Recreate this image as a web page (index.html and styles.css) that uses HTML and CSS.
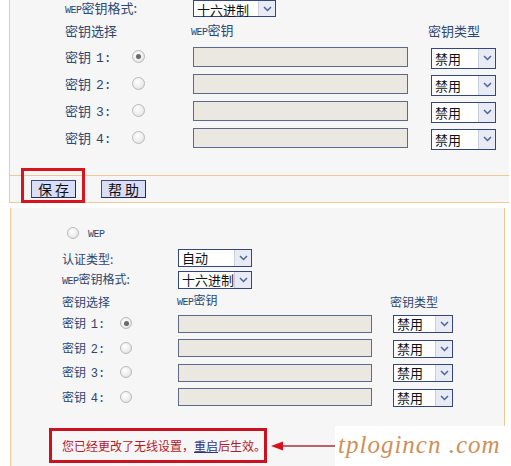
FILE: index.html
```html
<!DOCTYPE html>
<html>
<head>
<meta charset="utf-8">
<link rel="stylesheet" href="styles.css">
</head>
<body>
<div class="p1">
  <div class="p1-body">
    <div class="row fmt">
      <span class="lbl w128"><span class="en">WEP</span>密钥格式:</span>
      <div class="sel s-fmt"><span class="sv">十六进制</span><span class="arr"><svg width="9" height="6" viewBox="0 0 9 6"><polyline points="1,1 4.5,4.5 8,1"/></svg></span></div>
    </div>
    <div class="row hdr">
      <span class="lbl h1">密钥选择</span>
      <span class="lbl h2"><span class="en">WEP</span>密钥</span>
      <span class="lbl">密钥类型</span>
    </div>
    <div class="row key">
      <span class="lbl kl">密钥 <span class="num">1:</span></span>
      <span class="radio on"></span>
      <span class="inp"></span>
      <div class="sel s-type"><span class="sv">禁用</span><span class="arr"><svg width="9" height="6" viewBox="0 0 9 6"><polyline points="1,1 4.5,4.5 8,1"/></svg></span></div>
    </div>
    <div class="row key">
      <span class="lbl kl">密钥 <span class="num">2:</span></span>
      <span class="radio"></span>
      <span class="inp"></span>
      <div class="sel s-type"><span class="sv">禁用</span><span class="arr"><svg width="9" height="6" viewBox="0 0 9 6"><polyline points="1,1 4.5,4.5 8,1"/></svg></span></div>
    </div>
    <div class="row key">
      <span class="lbl kl">密钥 <span class="num">3:</span></span>
      <span class="radio"></span>
      <span class="inp"></span>
      <div class="sel s-type"><span class="sv">禁用</span><span class="arr"><svg width="9" height="6" viewBox="0 0 9 6"><polyline points="1,1 4.5,4.5 8,1"/></svg></span></div>
    </div>
    <div class="row key">
      <span class="lbl kl">密钥 <span class="num">4:</span></span>
      <span class="radio"></span>
      <span class="inp"></span>
      <div class="sel s-type"><span class="sv">禁用</span><span class="arr"><svg width="9" height="6" viewBox="0 0 9 6"><polyline points="1,1 4.5,4.5 8,1"/></svg></span></div>
    </div>
  </div>
  <div class="p1-btns">
    <span class="btn save">保 存<span class="hl"></span></span>
    <span class="btn">帮 助</span>
  </div>
</div>

<div class="p2">
  <div class="row2 wep">
    <span class="radio r2"></span>
    <span class="en wept">WEP</span>
  </div>
  <div class="row2 auth">
    <span class="lbl2 w116">认证类型:</span>
    <div class="sel s2-fmt"><span class="sv">自动</span><span class="arr"><svg width="9" height="6" viewBox="0 0 9 6"><polyline points="1,1 4.5,4.5 8,1"/></svg></span></div>
  </div>
  <div class="row2 auth fmt2">
    <span class="lbl2 w116"><span class="en">WEP</span>密钥格式:</span>
    <div class="sel s2-fmt"><span class="sv">十六进制</span><span class="arr"><svg width="9" height="6" viewBox="0 0 9 6"><polyline points="1,1 4.5,4.5 8,1"/></svg></span></div>
  </div>
  <div class="row2 hdr2">
    <span class="lbl2 h21">密钥选择</span>
    <span class="lbl2 h22"><span class="en">WEP</span>密钥</span>
    <span class="lbl2">密钥类型</span>
  </div>
  <div class="row2 key2">
    <span class="lbl2 kl2">密钥 <span class="num">1:</span></span>
    <span class="radio r2 on"></span>
    <span class="inp inp2"></span>
    <div class="sel s2-type"><span class="sv">禁用</span><span class="arr"><svg width="9" height="6" viewBox="0 0 9 6"><polyline points="1,1 4.5,4.5 8,1"/></svg></span></div>
  </div>
  <div class="row2 key2">
    <span class="lbl2 kl2">密钥 <span class="num">2:</span></span>
    <span class="radio r2"></span>
    <span class="inp inp2"></span>
    <div class="sel s2-type"><span class="sv">禁用</span><span class="arr"><svg width="9" height="6" viewBox="0 0 9 6"><polyline points="1,1 4.5,4.5 8,1"/></svg></span></div>
  </div>
  <div class="row2 key2">
    <span class="lbl2 kl2">密钥 <span class="num">3:</span></span>
    <span class="radio r2"></span>
    <span class="inp inp2"></span>
    <div class="sel s2-type"><span class="sv">禁用</span><span class="arr"><svg width="9" height="6" viewBox="0 0 9 6"><polyline points="1,1 4.5,4.5 8,1"/></svg></span></div>
  </div>
  <div class="row2 key2">
    <span class="lbl2 kl2">密钥 <span class="num">4:</span></span>
    <span class="radio r2"></span>
    <span class="inp inp2"></span>
    <div class="sel s2-type"><span class="sv">禁用</span><span class="arr"><svg width="9" height="6" viewBox="0 0 9 6"><polyline points="1,1 4.5,4.5 8,1"/></svg></span></div>
  </div>
  <div class="msgrow">
    <div class="msg">您已经更改了无线设置，<a class="lnk">重启</a>后生效。</div>
    <svg class="arrow" width="68" height="12" viewBox="0 0 68 12">
      <line x1="10" y1="6" x2="68" y2="6" stroke="#a8303c" stroke-width="1.6"/>
      <polygon points="0,6 12,1.5 12,10.5" fill="#d8101c"/>
    </svg>
  </div>
</div>
<div class="wm">tplogincn .com</div>
</body>
</html>
```

FILE: styles.css
```css
html, body {
  margin: 0;
  padding: 0;
}
body {
  width: 511px;
  height: 466px;
  overflow: hidden;
  background: #ffffff;
  font-family: "Noto Sans CJK SC", sans-serif;
  position: relative;
}

.en, .num {
  font-family: "Liberation Mono", "DejaVu Sans Mono", monospace;
}
.en {
  font-size: 10px;
  letter-spacing: -0.5px;
}

/* ---------- top panel ---------- */
.p1 {
  margin-left: 9px;
  width: 499px;
  border-left: 1px solid #efc893;
  background: #f6f6f6;
}
.p1-body {
  height: 175px;
  border-bottom: 1px solid #efc893;
  padding-left: 55px;
  box-sizing: content-box;
}
.row {
  display: flex;
  align-items: center;
}
.lbl {
  color: #2d4670;
  font-size: 13px;
  line-height: 16px;
  white-space: nowrap;
}
.row.fmt { height: 18px; }
.w128 { width: 128px; line-height: 18px; }
.row.hdr { height: 26px; }
.h1 { width: 126px; }
.h2 { width: 237px; }
.row.key { height: 27px; }
.kl { width: 67px; }
.kl .num { font-size: 13px; margin-left: 2px; }

.radio {
  width: 11px;
  height: 11px;
  border-radius: 50%;
  border: 1px solid #b9b9b9;
  background: radial-gradient(circle at 40% 35%, #ffffff 0%, #ececec 60%, #d6d6d6 100%);
  flex: none;
  position: relative;
  margin-top: -2px;
}
.radio.on::after {
  content: "";
  position: absolute;
  left: 3px;
  top: 3px;
  width: 5px;
  height: 5px;
  border-radius: 50%;
  background: #6a6a6a;
}
.row.key .radio { margin-right: 48px; }

.inp {
  width: 213px;
  height: 18px;
  border: 1px solid #5c6a8c;
  background: #ebe8e1;
  flex: none;
  margin-top: -1px;
}

.sel {
  display: flex;
  align-items: stretch;
  border: 1px solid #34477a;
  background: #ffffff;
  box-sizing: border-box;
  flex: none;
}
.sel .sv {
  flex: 1;
  color: #111;
  font-size: 14px;
  line-height: 17px;
  padding-left: 3px;
  white-space: nowrap;
}
.sel .arr {
  width: 16px;
  background: #e8ebf3;
  border-left: 1px solid #c9cfe0;
  display: flex;
  align-items: center;
  justify-content: center;
}
.sel .arr svg polyline {
  fill: none;
  stroke: #4b64a0;
  stroke-width: 1.5;
}
.s-fmt {
  width: 83px;
  height: 17px;
  margin-top: -1px;
}
.s-type {
  width: 65px;
  height: 21px;
  margin-left: 23px;
  margin-top: 1px;
}
.s-type .sv { line-height: 19px; }

/* buttons */
.p1-btns {
  height: 26px;
  border-bottom: 1px solid #efc893;
  padding-left: 21px;
  display: flex;
  align-items: center;
  gap: 25px;
}
.btn {
  position: relative;
  width: 45px;
  height: 18px;
  box-sizing: border-box;
  border: 1px solid #444c78;
  border-right-color: #262b50;
  border-bottom-color: #262b50;
  background: #d9ddf6;
  color: #111;
  font-size: 14px;
  line-height: 16px;
  text-align: center;
}
.hl {
  position: absolute;
  left: -11px;
  top: -13px;
  width: 64px;
  height: 35px;
  box-sizing: border-box;
  border: 3px solid #d8141f;
}

/* ---------- second panel ---------- */
.p2 {
  margin-top: 5px;
  margin-left: 10px;
  width: 442px;
  height: 242px;
  border-left: 1px solid #efc893;
  border-right: 1px solid #efc893;
  background: #f6f6f6;
  padding-left: 51px;
  padding-top: 16px;
  box-sizing: content-box;
}
.row2 {
  display: flex;
  align-items: center;
}
.lbl2 {
  color: #2d4670;
  font-size: 12px;
  line-height: 15px;
  white-space: nowrap;
}
.row2.wep {
  height: 20px;
  padding-left: 5px;
}
.wept {
  margin-left: 9px;
  color: #2d4670;
  font-size: 10px;
}
.r2 { width: 10px; height: 10px; }
.r2.on::after { left: 2.5px; top: 2.5px; }
.row2.auth {
  height: 20px;
  margin-top: 4px;
}
.row2.fmt2 { margin-top: 2px; }
.w116 { width: 116px; }
.s2-fmt {
  width: 74px;
  height: 18px;
}
.sel .sv { font-size: 13px; }
.s2-fmt .sv { line-height: 16px; }

.row2.hdr2 { height: 22px; }
.h21 { width: 115px; }
.h22 { width: 213px; }

.row2.key2 { height: 24.5px; }
.kl2 { width: 58px; }
.kl2 .num { font-size: 12px; margin-left: 2px; }
.row2.key2 .radio { margin-right: 46px; }
.inp2 {
  width: 192px;
  height: 16px;
}
.s2-type {
  width: 60px;
  height: 18px;
  margin-left: 21px;
}
.s2-type .sv { line-height: 16px; }

.msgrow {
  margin-top: 18px;
  margin-left: -13px;
  display: flex;
  align-items: center;
}
.msg {
  width: 218px;
  height: 35px;
  box-sizing: border-box;
  border: 3px solid #cc1220;
  padding-left: 10px;
  color: #b41a2a;
  font-size: 12px;
  line-height: 29px;
  white-space: nowrap;
}
.lnk {
  color: #33337a;
  text-decoration: underline;
}
.arrow {
  margin-left: 4px;
  flex: none;
}

.wm {
  position: absolute;
  left: 335px;
  top: 426px;
  width: 176px;
  height: 40px;
  background: #ffffff;
  color: #cf9058;
  font-family: "Liberation Serif", serif;
  font-style: italic;
  font-size: 25px;
  line-height: 38px;
  letter-spacing: 1px;
  padding-left: 3px;
  box-sizing: border-box;
  white-space: nowrap;
  overflow: hidden;
}
```
